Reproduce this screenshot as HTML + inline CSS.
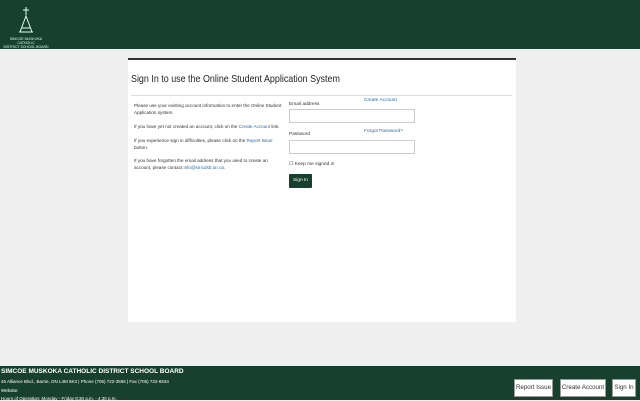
<!DOCTYPE html>
<html><head><style>
*{margin:0;padding:0;box-sizing:border-box}
body{width:640px;height:400px;overflow:hidden;background:#efefef;font-family:"Liberation Sans",sans-serif;position:relative}
.hdr{position:absolute;left:0;top:0;width:640px;height:49px;background:#17402f}
.logo{position:absolute;left:2px;top:6px;width:48px;color:#dfe;font-size:3.5px;text-align:center;line-height:4px}
.card{position:absolute;left:128px;top:58px;width:388px;height:264px;background:#fff;border-top:2px solid #333}
h1{position:absolute;left:3px;top:13px;font-size:10.5px;font-weight:normal;color:#222;transform:scaleX(.85);transform-origin:left;white-space:nowrap}
.rule{position:absolute;left:3px;right:4px;top:35px;border-top:1px solid #ddd}
.l{position:absolute;left:6px;width:150px;font-size:4.6px;color:#333;line-height:7px}
a{color:#2a6aa8;text-decoration:none}
.lab{position:absolute;font-size:4.8px;color:#333}
.inp{position:absolute;left:161px;width:126px;height:14px;border:1px solid #ccc;background:#fff}
.btn{position:absolute;left:161px;top:114px;width:23px;height:14px;background:#17402f;color:#fff;font-size:4.8px;text-align:center;line-height:14px;border-radius:1px}
.ftr{position:absolute;left:0;top:366px;width:640px;height:34px;background:#17402f;color:#fff}
.fb{position:absolute;top:379px;height:18px;background:#fff;border:1px solid #999;color:#333;font-size:6.2px;line-height:16px;text-align:center}
</style></head><body>
<div class="hdr"><div class="logo">
<svg width="20" height="30" viewBox="0 0 20 30"><g fill="none" stroke="#dfe" stroke-width="1"><path d="M10 1v8M7 4h6M4 26L10 10l6 16M3 26h14M6 22h8"/></g></svg><br>SIMCOE MUSKOKA CATHOLIC<br>DISTRICT SCHOOL BOARD</div></div>
<div class="card">
<h1>Sign In to use the Online Student Application System</h1>
<div class="rule"></div>
<div class="l" style="top:42px">Please use your existing account information to enter the Online Student Application system.</div>
<div class="l" style="top:63px">If you have yet not created an account, click on the <a>Create Account</a> link.</div>
<div class="l" style="top:77px">If you experience sign in difficulties, please click on the <a>Report Issue</a> button.</div>
<div class="l" style="top:97px">If you have forgotten the email address that you used to create an account, please contact <a>info@smcdsb.on.ca</a>.</div>
<div class="lab" style="left:161px;top:42px">Email address</div>
<div class="lab" style="left:236px;top:38px"><a>Create Account</a></div>
<div class="inp" style="top:49px"></div>
<div class="lab" style="left:161px;top:72px">Password</div>
<div class="lab" style="left:236px;top:69px"><a>Forgot Password?</a></div>
<div class="inp" style="top:80px"></div>
<div class="lab" style="left:161px;top:102px">☐ Keep me signed in</div>
<div class="btn">Sign In</div>
</div>
<div class="ftr">
<div style="position:absolute;left:1px;top:2px;font-size:6.5px;font-weight:bold">SIMCOE MUSKOKA CATHOLIC DISTRICT SCHOOL BOARD</div>
<div style="position:absolute;left:1px;top:13px;font-size:4.5px">46 Alliance Blvd., Barrie, ON L4M 5K3 | Phone (705) 722-3555 | Fax (705) 722-6534</div>
<div style="position:absolute;left:1px;top:22px;font-size:4.5px">Website:</div>
<div style="position:absolute;left:1px;top:30px;font-size:4.5px">Hours of Operation: Monday - Friday 8:30 a.m. - 4:30 p.m.</div>
</div>
<div class="fb" style="left:514px;width:39px">Report Issue</div>
<div class="fb" style="left:560px;width:46px">Create Account</div>
<div class="fb" style="left:612px;width:24px">Sign In</div>
</body></html>
